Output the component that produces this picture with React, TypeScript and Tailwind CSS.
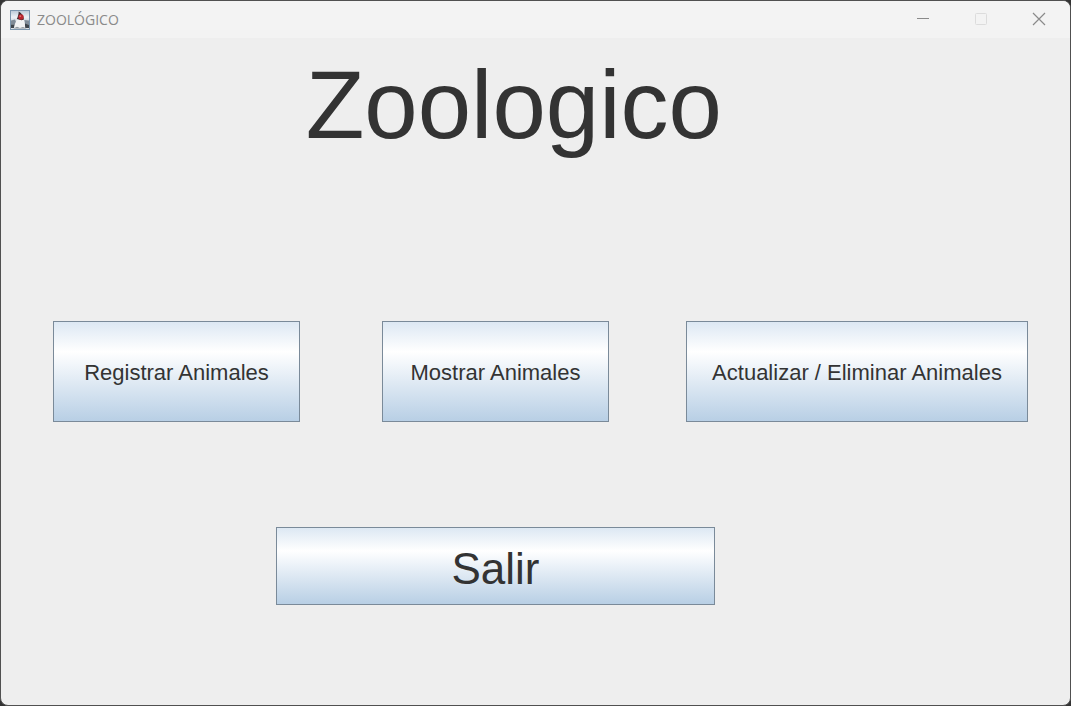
import type { ReactNode } from "react";

function DukeIcon() {
  return (
    <svg viewBox="0 0 20 20" className="h-5 w-5" aria-hidden="true">
      <defs>
        <linearGradient id="tile" x1="0" y1="0" x2="0" y2="1">
          <stop offset="0" stopColor="#b9c8d6" />
          <stop offset="0.35" stopColor="#edf2f6" />
          <stop offset="0.55" stopColor="#cfd8e0" />
          <stop offset="1" stopColor="#dfe4e9" />
        </linearGradient>
      </defs>
      <rect x="0.5" y="0.5" width="19" height="19" fill="url(#tile)" stroke="#7d97ae" />
      <path d="M1 10.500 5 9.500l1.500 3.500-2 1.500H1zM14 10l5 .5v4.500l-4-.5z" fill="#7f8b97" />
      <path d="M1 14.500h4l-.8 3.500H1zM15 13.500l4 1.500v3h-4z" fill="#3f464d" />
      <path d="M9 2c2.500 1.500 4.600 4.500 5.300 8.500l1 7.500-3-1-2.500 1.300-3-1.300-2.800 1c.4-3 1.600-6 3-8.500C8.200 7 8.600 4.500 9 2z" fill="#f1f2f3" />
      <path d="M8.700 1.500c2.600 1.300 4.800 4.200 5.300 8l-2.500.8L6.800 9C8 6.500 8.600 4 8.700 1.500z" fill="#3a2c30" />
      <circle cx="11" cy="7" r="2.700" fill="#b9272f" />
      <circle cx="10.300" cy="6.200" r="0.900" fill="#df6a6e" />
      <path d="M3.500 18.500 7 16.800l3 1.200 3-1 3.500 1.500z" fill="#8e969e" />
    </svg>
  );
}

function CaptionButton({ label, disabled, children }: { label: string; disabled?: boolean; children: ReactNode }) {
  return (
    <button
      type="button"
      aria-label={label}
      disabled={disabled}
      className="flex w-[58px] items-center justify-center text-[#8a8a8a] disabled:text-[#dcdcdc]"
    >
      <svg viewBox="0 0 14 14" className="h-3.5 w-3.5" fill="none" stroke="currentColor" aria-hidden="true">
        {children}
      </svg>
    </button>
  );
}

const metal =
  "flex items-center justify-center whitespace-nowrap border border-[#7a8a99] bg-linear-to-b from-[#dde8f3] via-white via-30% to-[#b8cfe5] text-[#333333]";

export default function App() {
  return (
    <div className="flex min-h-screen bg-[#333333] font-['Liberation_Sans',Arial,sans-serif]">
      <div className="flex flex-1 flex-col overflow-hidden rounded-lg border border-[#505050] bg-[#eeeeee]">
        <header className="flex h-[37px] justify-between bg-[#f3f3f3] pl-[9px]">
          <div className="flex items-center gap-[7px]">
            <DukeIcon />
            <span className="font-['Open_Sans','Noto_Sans',sans-serif] text-sm text-[#8a8a8a]">ZOOLÓGICO</span>
          </div>
          <div className="flex pr-0.5 pb-0.5">
            <CaptionButton label="Minimizar">
              <path d="M1 6.500h12" />
            </CaptionButton>
            <CaptionButton label="Maximizar" disabled>
              <rect x="1.500" y="1.500" width="11" height="11" rx="1" />
            </CaptionButton>
            <CaptionButton label="Cerrar">
              <path d="M1 1l12 12M13 1 1 13" strokeWidth="1.200" />
            </CaptionButton>
          </div>
        </header>
        <main>
          <h1 className="mt-3 pl-[28.5%] text-8xl leading-[110px] text-[#333333]">Zoologico</h1>
          <div className="mt-[161px] grid grid-cols-[52fr_247fr_82fr_227fr_77fr_342fr_42fr] text-[22px]">
            <button type="button" className={`col-start-2 h-[101px] pt-0.5 ${metal}`}>Registrar Animales</button>
            <button type="button" className={`col-start-4 h-[101px] pt-0.5 ${metal}`}>Mostrar Animales</button>
            <button type="button" className={`col-start-6 h-[101px] pt-0.5 ${metal}`}>Actualizar / Eliminar Animales</button>
          </div>
          <div className="mt-[105px] grid grid-cols-[275fr_439fr_355fr] pb-10 text-[44px]">
            <button type="button" className={`col-start-2 h-[78px] pt-1.5 ${metal}`}>Salir</button>
          </div>
        </main>
      </div>
    </div>
  );
}
